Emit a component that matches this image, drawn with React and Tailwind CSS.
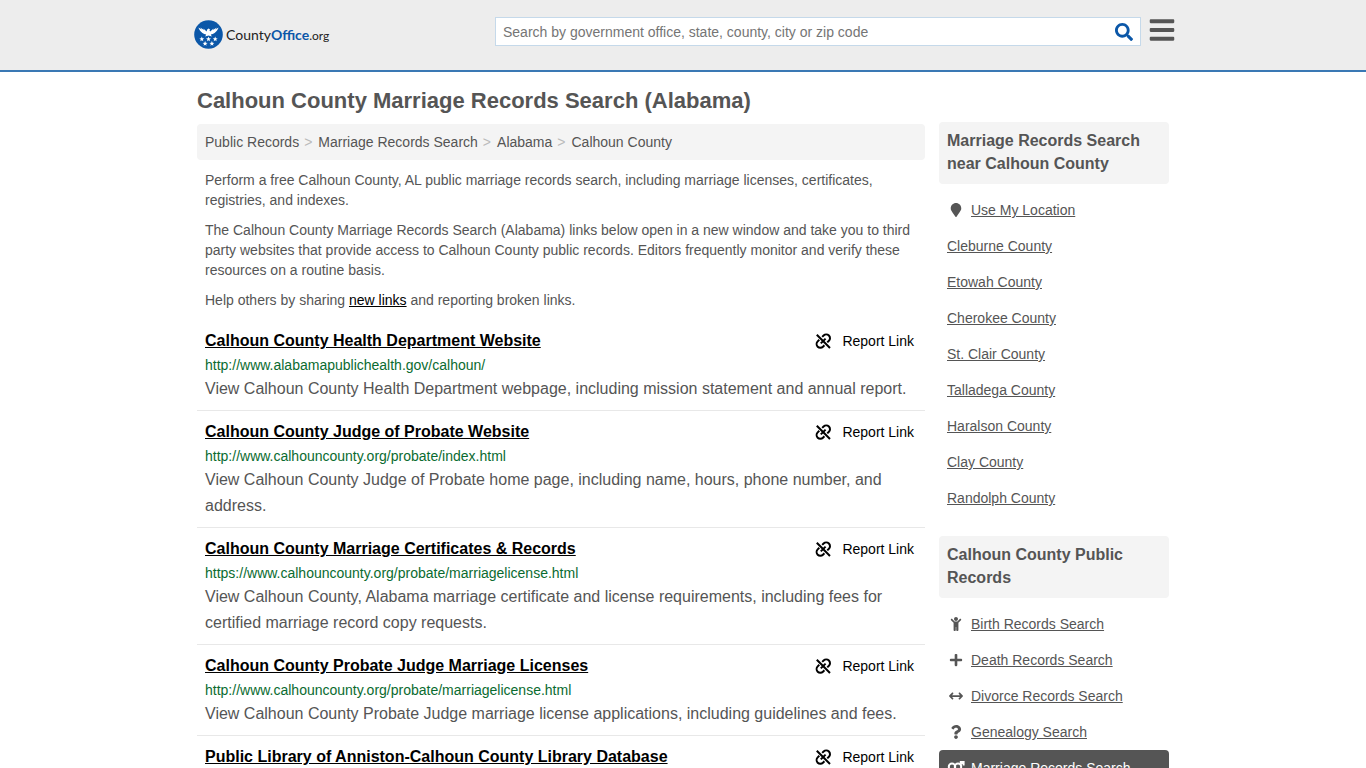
import { FaBars, FaSearch, FaMapMarker, FaPlus, FaQuestion, FaChild } from "react-icons/fa";
import { FaArrowsLeftRight } from "react-icons/fa6";

const crumbs = ["Public Records", "Marriage Records Search", "Alabama", "Calhoun County"];

const results = [
  ["Calhoun County Health Department Website", "http://www.alabamapublichealth.gov/calhoun/", "View Calhoun County Health Department webpage, including mission statement and annual report."],
  ["Calhoun County Judge of Probate Website", "http://www.calhouncounty.org/probate/index.html", "View Calhoun County Judge of Probate home page, including name, hours, phone number, and address."],
  ["Calhoun County Marriage Certificates & Records", "https://www.calhouncounty.org/probate/marriagelicense.html", "View Calhoun County, Alabama marriage certificate and license requirements, including fees for certified marriage record copy requests."],
  ["Calhoun County Probate Judge Marriage Licenses", "http://www.calhouncounty.org/probate/marriagelicense.html", "View Calhoun County Probate Judge marriage license applications, including guidelines and fees."],
  ["Public Library of Anniston-Calhoun County Library Database", "", ""],
];

function CoupleIcon() {
  return (
    <svg viewBox="0 0 18 18" className="size-[18px] shrink-0" fill="none" stroke="currentColor" strokeWidth="2" aria-hidden="true">
      <circle cx="5" cy="7.8" r="3.2" />
      <circle cx="11" cy="7.8" r="3.2" />
      <path d="M13.2 5.6L16 2.8M12.8 2.9H16.6V6.6" />
      <path d="M5 11V16M2.6 13.6H7.4" />
    </svg>
  );
}

const nearby = [
  { label: "Use My Location", icon: FaMapMarker },
  { label: "Cleburne County" },
  { label: "Etowah County" },
  { label: "Cherokee County" },
  { label: "St. Clair County" },
  { label: "Talladega County" },
  { label: "Haralson County" },
  { label: "Clay County" },
  { label: "Randolph County" },
];

const records = [
  { label: "Birth Records Search", icon: FaChild },
  { label: "Death Records Search", icon: FaPlus },
  { label: "Divorce Records Search", icon: FaArrowsLeftRight },
  { label: "Genealogy Search", icon: FaQuestion },
  { label: "Marriage Records Search", icon: CoupleIcon, active: true },
];

const STAR = "M0,-2.6 L0.7,-0.9 L2.5,-0.8 L1.05,0.35 L1.5,2.1 L0,1.1 L-1.5,2.1 L-1.05,0.35 L-2.5,-0.8 L-0.7,-0.9 Z";
const stars = [[7.8, 19.2], [14.5, 19.2], [21.2, 19.2], [11.1, 23.7], [17.9, 23.7]];

function Logo() {
  return (
    <a href="#home" aria-label="CountyOffice.org" className="flex items-center gap-[3px] font-['Lato',sans-serif] text-sm text-[#222]">
      <svg viewBox="0 0 29 29" className="size-[29px]" aria-hidden="true">
        <circle cx="14.5" cy="14.5" r="14.3" fill="#0b57a8" />
        <path
          fill="#fff"
          d="M4.4 7.6L7.6 9.4L6.2 7.4L10 10L9.4 8.4L12.6 11.6L13.2 9.4L14.6 8.6L16.2 9.4L15.4 10L16.2 11.6L19.6 8.4L19 10L22.8 7.4L21.4 9.4L24.6 7.6C23.8 9.8 22.6 11.8 20.6 13C19.4 13.8 18.2 14.4 16.8 14.6L17.8 16.4L14.5 15.6L11.2 16.4L12.2 14.6C10.8 14.4 9.6 13.8 8.4 13C6.4 11.8 5.2 9.8 4.4 7.6Z"
        />
        {stars.map(([x, y]) => (
          <path key={`${x}-${y}`} d={STAR} fill="#fff" transform={`translate(${x} ${y})`} />
        ))}
      </svg>
      <span>County<b className="text-[#0b57a8]">Office</b><span className="text-xs">.org</span></span>
    </a>
  );
}

function BrokenLinkIcon() {
  return (
    <svg viewBox="0 0 18 18" className="size-[18px]" fill="none" stroke="currentColor" strokeWidth="2" aria-hidden="true">
      <path d="M2.8 2.8L16 16" />
      <path d="M8.2 4.9L9.6 3.5A3.6 3.6 0 0 1 14.9 8.8L13.3 10.4" />
      <path d="M10.4 13.3L9 14.7A3.6 3.6 0 0 1 3.7 9.4L5.3 7.8" />
      <path d="M6.8 11.4L11.6 6.6" />
    </svg>
  );
}

function SideList({ title, items }) {
  return (
    <section>
      <h2 className="rounded bg-[#f4f4f4] px-2 pt-[7px] pb-[9px] text-base leading-[23px] font-bold">{title}</h2>
      <ul className="pt-2">
        {items.map(({ label, icon: Icon, active }) => (
          <li key={label}>
            <a href="#list" className={active ? "flex h-9 items-center rounded bg-[#555] px-2 text-white underline" : "flex h-9 items-center px-2 underline"}>
              {Icon && (
                <span className="mr-[6px] flex w-[18px] justify-center">
                  <Icon className="size-[14px]" aria-hidden="true" />
                </span>
              )}
              {label}
            </a>
          </li>
        ))}
      </ul>
    </section>
  );
}

export default function App() {
  return (
    <div className="h-screen overflow-hidden bg-white font-['Liberation_Sans',Arial,sans-serif] text-sm leading-5 text-[#555]">
      <header className="border-b-2 border-[#3a78b4] bg-[#ededed]">
        <div className="mx-auto flex h-[70px] max-w-[986px] items-start">
          <div className="flex-1 pt-5 pl-1"><Logo /></div>
          <form className="mt-[17px] flex h-[29px] w-[646px] items-center border border-[#c5d9ea] bg-white px-[7px]">
            <input
              type="text"
              aria-label="Search"
              placeholder="Search by government office, state, county, city or zip code"
              className="min-w-0 flex-1 bg-transparent outline-none placeholder:text-[#757575]"
            />
            <button type="submit" aria-label="Search" className="text-[#0b57a8]"><FaSearch className="size-[18px]" /></button>
          </form>
          <button type="button" aria-label="Menu" className="mt-4 ml-[7px] text-[#555]"><FaBars className="size-7" /></button>
        </div>
      </header>

      <div className="mx-auto max-w-[980px] px-1">
        <h1 className="pt-4 pb-[10px] text-[22px] leading-[26px] font-bold">Calhoun County Marriage Records Search (Alabama)</h1>
        <div className="flex items-start gap-[14px]">
          <main className="min-w-0 flex-1">
            <nav aria-label="Breadcrumb" className="rounded bg-[#f4f4f4] px-2 py-2">
              <ol className="flex gap-[5px]">
                {crumbs.map((c, i) => (
                  <li key={c} className="flex gap-[6px]">
                    {i > 0 && <span className="text-[#bbb]">&gt;</span>}
                    <a href="#crumb">{c}</a>
                  </li>
                ))}
              </ol>
            </nav>
            <div className="flex flex-col gap-[10px] px-2 py-[10px]">
              <p>Perform a free Calhoun County, AL public marriage records search, including marriage licenses, certificates, registries, and indexes.</p>
              <p>The Calhoun County Marriage Records Search (Alabama) links below open in a new window and take you to third party websites that provide access to Calhoun County public records. Editors frequently monitor and verify these resources on a routine basis.</p>
              <p>Help others by sharing <a href="#new" className="text-black underline">new links</a> and reporting broken links.</p>
            </div>
            <ul>
              {results.map(([title, url, text]) => (
                <li key={title} className="border-b border-[#e8e8e8] p-2">
                  <div className="flex items-center justify-between pt-px pr-[3px]">
                    <h3 className="text-base leading-6 font-bold text-black"><a href="#result" className="underline">{title}</a></h3>
                    <button type="button" className="flex items-center gap-[10px] text-black">
                      <BrokenLinkIcon />
                      Report Link
                    </button>
                  </div>
                  <div className="mt-[2px] mb-px text-[#0a6b30]">{url}</div>
                  <p className="text-base leading-[26px]">{text}</p>
                </li>
              ))}
            </ul>
          </main>
          <aside className="-mt-[2px] flex w-[230px] flex-col gap-5">
            <SideList title="Marriage Records Search near Calhoun County" items={nearby} />
            <SideList title="Calhoun County Public Records" items={records} />
          </aside>
        </div>
      </div>
    </div>
  );
}
